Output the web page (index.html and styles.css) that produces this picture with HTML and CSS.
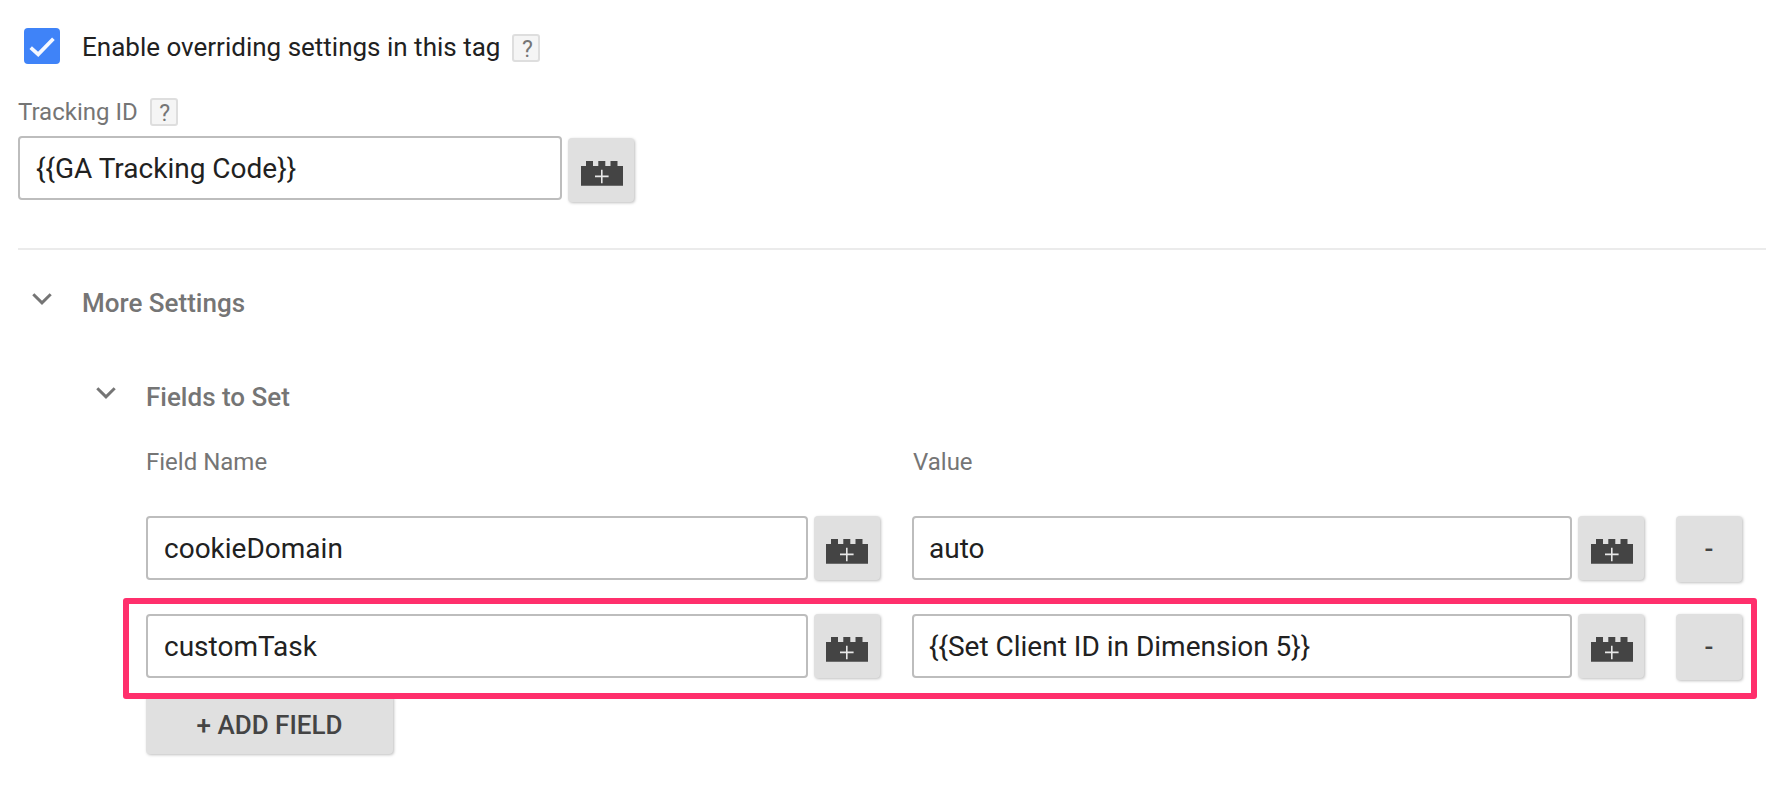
FILE: index.html
```html
<!DOCTYPE html>
<html lang="en">
<head>
<meta charset="utf-8">
<title>Tag settings</title>
<link rel="stylesheet" href="styles.css">
</head>
<body>
<svg class="defs" width="0" height="0" aria-hidden="true">
  <symbol id="brick" viewBox="0 0 42 25">
    <path fill="#444" d="M0 5h5V0h7v5h5.3V0h7v5h5.2V0h7v5H42v19.7H0z"/>
    <path stroke="#e8e8e8" stroke-width="1.6" fill="none" d="M20.8 8.8v13.4M14 15.4h13.6"/>
  </symbol>
  <symbol id="chevron" viewBox="0 0 20 12">
    <path fill="none" stroke="#757575" stroke-width="3" d="M1.3 1.3 10 9.8l8.7-8.5"/>
  </symbol>
</svg>
<main class="panel">
  <div class="override">
    <span class="checkbox"><svg width="36" height="36" viewBox="0 0 36 36"><path d="M6.7 19.7 14.2 26.4 29.4 10.7" fill="none" stroke="#f5f8ff" stroke-width="3.7"/></svg></span>
    <span class="override-label">Enable overriding settings in this tag</span>
    <span class="help">?</span>
  </div>
  <div class="tracking-label"><span class="caption">Tracking ID</span><span class="help">?</span></div>
  <div class="tracking-row">
    <div class="input"><span>{{GA Tracking Code}}</span></div>
    <div class="btn brick nudge"><svg width="42" height="25"><use href="#brick"/></svg></div>
  </div>
  <section class="more">
    <div class="heading"><svg class="chevron" width="20" height="12"><use href="#chevron"/></svg><span>More Settings</span></div>
    <div class="fields">
      <div class="heading"><svg class="chevron" width="20" height="12"><use href="#chevron"/></svg><span>Fields to Set</span></div>
      <div class="table">
        <div class="row head"><span class="caption">Field Name</span><span></span><span class="caption value">Value</span></div>
        <div class="row">
          <div class="input"><span>cookieDomain</span></div>
          <div class="btn brick"><svg width="42" height="25"><use href="#brick"/></svg></div>
          <div class="input value"><span>auto</span></div>
          <div class="btn brick nudge"><svg width="42" height="25"><use href="#brick"/></svg></div>
          <div class="btn remove">-</div>
        </div>
        <div class="row marked">
          <div class="input"><span>customTask</span></div>
          <div class="btn brick"><svg width="42" height="25"><use href="#brick"/></svg></div>
          <div class="input value"><span>{{Set Client ID in Dimension 5}}</span></div>
          <div class="btn brick nudge"><svg width="42" height="25"><use href="#brick"/></svg></div>
          <div class="btn remove">-</div>
          <div class="highlight"></div>
        </div>
        <div class="btn add"><span>+ ADD FIELD</span></div>
      </div>
    </div>
  </section>
</main>
</body>
</html>
```
FILE: styles.css
```css
* { box-sizing: border-box; }
body {
  margin: 0;
  height: 792px;
  overflow: hidden;
  background: #fff;
  color: #212121;
  font-family: Roboto, "Liberation Sans", sans-serif;
}
.defs { display: block; }
.panel { padding: 28px 0 0 18px; }
.override {
  display: flex;
  align-items: center;
  height: 36px;
  padding-left: 6px;
}
.checkbox {
  width: 36px;
  height: 36px;
  margin-right: 22px;
  border-radius: 4px;
  background: #3f83f8;
}
.checkbox svg { display: block; }
.override-label {
  padding-top: 2px;
  font-size: 26px;
  line-height: 36px;
  white-space: nowrap;
}
.help {
  width: 28px;
  height: 28px;
  margin-left: 12px;
  padding-left: 2px;
  border: 2px solid #dedede;
  border-radius: 3px;
  background: #f5f5f5;
  color: #757575;
  font-size: 23px;
  line-height: 27px;
  text-align: center;
}
.override .help { margin-top: 4px; }
.caption { font-size: 24px; line-height: 28px; color: #757575; }
.tracking-label { display: flex; height: 28px; margin-top: 34px; }
.tracking-row {
  display: grid;
  grid-template-columns: 544px 66px;
  column-gap: 6px;
  height: 67px;
  margin-top: 10px;
}
.tracking-row .btn { margin-top: 2px; }
.input {
  height: 64px;
  padding: 1px 0 0 16px;
  border: 2px solid #bdbdbd;
  border-radius: 4px;
  font-size: 28px;
  line-height: 60px;
  white-space: nowrap;
}
.btn {
  display: flex;
  align-items: center;
  justify-content: center;
  height: 64px;
  border-radius: 4px;
  background: #e0e0e0;
  box-shadow: 1px 1px 3px rgba(0, 0, 0, 0.26);
  color: #444;
  font-size: 26px;
  font-weight: 500;
}
.brick svg { display: block; margin-top: 7px; }
.nudge { padding-left: 2px; }
.more { margin-top: 45px; border-top: 2px solid #ebebeb; }
.heading {
  display: flex;
  height: 36px;
  padding-left: 14px;
  color: #757575;
  font-size: 26px;
  font-weight: 500;
  line-height: 36px;
}
.chevron { margin: 8px 30px 0 0; }
.more > .heading { margin-top: 35px; }
.fields { margin-top: 58px; padding-left: 64px; }
.table { padding-left: 64px; }
.row {
  position: relative;
  display: grid;
  grid-template-columns: 662px 66px 686px 66px 93px;
  column-gap: 6px;
  height: 98px;
}
.value { margin-left: 26px; }
.input.value { padding-left: 15px; }
.remove {
  width: 66px;
  height: 66px;
  margin-left: 26px;
  padding-bottom: 1px;
}
.head { height: 68px; margin-top: 33px; }
.caption.value { margin-left: 27px; }
.marked { height: 82px; }
.highlight {
  position: absolute;
  z-index: 1;
  left: -23px;
  top: -16px;
  width: 1634px;
  height: 101px;
  border: 6px solid #ff2f6c;
  border-radius: 3px;
}
.add { width: 247px; height: 59px; margin-top: -1px; padding-top: 1px; }
```
